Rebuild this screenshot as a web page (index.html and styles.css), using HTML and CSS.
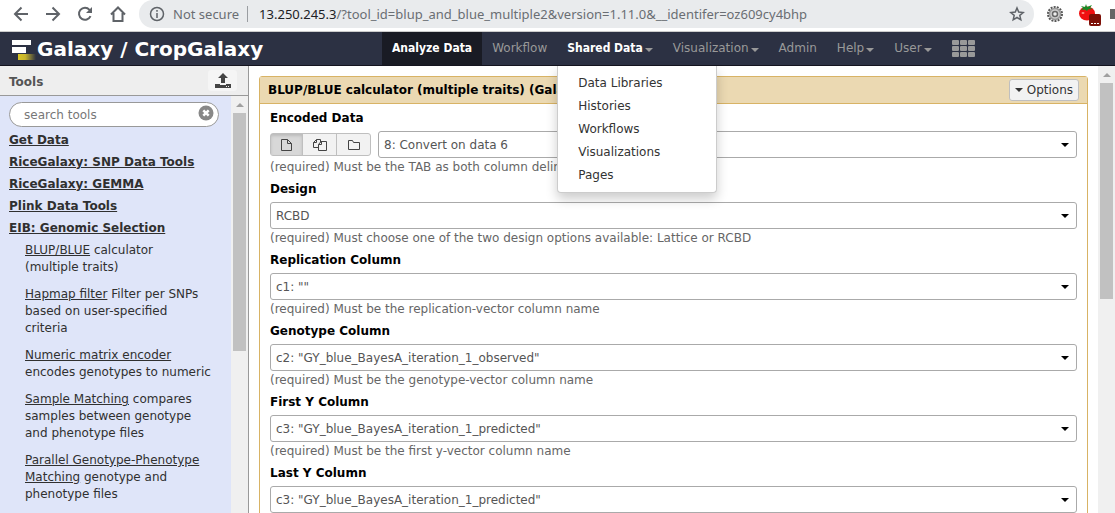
FILE: index.html
```html
<!DOCTYPE html>
<html lang="en">
<head>
<meta charset="utf-8">
<title>Galaxy / CropGalaxy</title>
<link rel="stylesheet" href="styles.css">
</head>
<body>
<div class="browser">
  <button class="tool" aria-label="Back"><svg width="16" height="16" viewBox="0 0 16 16"><path d="M15 8H2M8.500 1.500L2 8l6.500 6.500"/></svg></button>
  <button class="tool" aria-label="Forward"><svg width="16" height="16" viewBox="0 0 16 16"><path d="M1 8h13M7.500 1.500L14 8l-6.500 6.500"/></svg></button>
  <button class="tool" aria-label="Reload"><svg width="16" height="16" viewBox="0 0 16 16"><path d="M13.500 10.200A6 6 0 1 1 12.500 3.800L14 5.500"/><path class="solid" d="M15 1v6H9z"/></svg></button>
  <button class="tool" aria-label="Home"><svg width="18" height="18" viewBox="0 0 18 18"><path d="M2 9.500L9 2.500l7 7M4.500 8v8h9V8"/></svg></button>
  <div class="omnibox">
    <svg class="info" width="16" height="16" viewBox="0 0 16 16"><circle cx="8" cy="8" r="6.500"/><path d="M8 7v5M8 4v1.800"/></svg>
    <span class="insecure">Not secure</span>
    <span class="url"><b>13.250.245.3</b>/?tool_id=blup_and_blue_multiple2&amp;version=1.11.0&amp;__identifer=oz609cy4bhp</span>
    <button class="star" aria-label="Bookmark"><svg width="16" height="16" viewBox="0 0 16 16"><path d="M8 2l1.700 4.100 4.500.4-3.400 2.900 1 4.400L8 11.500l-3.800 2.300 1-4.400-3.400-2.900 4.500-.4z"/></svg></button>
  </div>
  <svg class="ext" width="18" height="18" viewBox="0 0 18 18"><circle cx="9" cy="9" r="7" fill="none" stroke="#555" stroke-width="2" stroke-dasharray="2 1.140"/><circle cx="9" cy="9" r="5.500" fill="#ccc" stroke="#999" stroke-width="1.500"/><circle cx="9" cy="9" r="2.500" fill="#eee" stroke="#666" stroke-width="1.500"/></svg>
  <svg class="ext" width="24" height="24" viewBox="0 0 24 24"><ellipse cx="9" cy="11.500" rx="8" ry="7" fill="#f01010"/><path d="M8 2l1 3 5-2-2 3 3 1-5 .5L9 9 7 7.500 3 8l2-2-2-2 4 1z" fill="#178a25"/><ellipse cx="5" cy="11" rx="1.500" ry="1" fill="#ff9080"/><rect x="11" y="12" width="12" height="12" rx="2" fill="#7d1007"/><path d="M13 21.500h8" stroke="#fff" stroke-dasharray="2 1"/></svg>
  <span class="more"></span>
</div>

<header class="masthead">
  <a class="brand" href="#"><svg width="26" height="23" viewBox="0 0 26 23"><defs><linearGradient id="bar"><stop offset="0" stop-color="#d8c426"/><stop offset=".4" stop-color="#c8b52d"/><stop offset="1" stop-color="#2c3143"/></linearGradient></defs><path fill="#fff" d="M1 3h19v5H1zM1 10h14v6H1z"/><path fill="url(#bar)" d="M7 17h18v6H7z"/></svg><span>Galaxy / CropGalaxy</span></a>
  <nav class="nav">
    <a class="active" href="#">Analyze Data</a>
    <a href="#">Workflow</a>
    <div class="drop"><a class="open" href="#">Shared Data<i class="caret"></i></a>
      <div class="menu"><a href="#">Data Libraries</a><a href="#">Histories</a><a href="#">Workflows</a><a href="#">Visualizations</a><a href="#">Pages</a></div>
    </div>
    <a href="#">Visualization<i class="caret"></i></a>
    <a href="#">Admin</a>
    <a href="#">Help<i class="caret"></i></a>
    <a href="#">User<i class="caret"></i></a>
    <a href="#" aria-label="Scratchbook"><svg width="23" height="17" viewBox="0 0 23 17" fill="#999"><rect width="7" height="5" rx="1"/><rect x="8" width="7" height="5" rx="1"/><rect x="16" width="7" height="5" rx="1"/><rect y="6" width="7" height="5" rx="1"/><rect x="8" y="6" width="7" height="5" rx="1"/><rect x="16" y="6" width="7" height="5" rx="1"/><rect y="12" width="7" height="5" rx="1"/><rect x="8" y="12" width="7" height="5" rx="1"/><rect x="16" y="12" width="7" height="5" rx="1"/></svg></a>
  </nav>
</header>

<div class="workspace">
  <aside class="sidebar">
    <div class="side-head"><h2>Tools</h2><button class="upload" aria-label="Upload data"><svg width="16" height="16" viewBox="0 0 16 16" fill="#444"><path d="M8 0l5 5H10v5H6V5H3z"/><path d="M0 11h5v1h6v-1h5v4H0z"/><path d="M11 13h1v1h-1zM13 13h1v1h-1z" fill="#eee"/></svg></button></div>
    <div class="side-body">
      <div class="tools">
        <div class="search"><input type="text" placeholder="search tools" aria-label="search tools"><button aria-label="Clear"><svg width="16" height="16" viewBox="0 0 16 16"><circle cx="8" cy="8" r="7.500" fill="#888"/><path d="M5.300 5.300l5.400 5.400M10.700 5.300l-5.400 5.400" stroke="#fff" stroke-width="2.500"/></svg></button></div>
        <a class="section" href="#">Get Data</a>
        <a class="section" href="#">RiceGalaxy: SNP Data Tools</a>
        <a class="section" href="#">RiceGalaxy: GEMMA</a>
        <a class="section" href="#">Plink Data Tools</a>
        <a class="section" href="#">EIB: Genomic Selection</a>
        <div class="list">
          <p><a href="#">BLUP/BLUE</a> calculator (multiple&nbsp;traits)</p>
          <p><a href="#">Hapmap filter</a> Filter per SNPs based on user-specified criteria</p>
          <p><a href="#">Numeric matrix encoder</a> encodes genotypes to numeric</p>
          <p><a href="#">Sample Matching</a> compares samples between genotype and phenotype files</p>
          <p><a href="#">Parallel Genotype-Phenotype Matching</a> genotype and phenotype files</p>
        </div>
      </div>
      <div class="scroll"><i class="up"></i><div class="thumb side-thumb"></div></div>
    </div>
  </aside>
  <main class="center">
    <section class="panel">
      <div class="panel-head"><h1>BLUP/BLUE calculator (multiple traits) (Galaxy Version 1.11.0)</h1><button class="options"><i class="caret"></i>Options</button></div>
      <form class="form">
        <div class="field"><label for="f1">Encoded Data</label>
          <div class="row">
            <div class="group">
              <button type="button" class="on" aria-label="Single dataset"><svg width="13" height="14" viewBox="0 0 13 14"><path d="M1.500 1.500h6l4 4v7h-10zM7.500 1.500v4h4"/></svg></button><button type="button" aria-label="Multiple datasets"><svg width="14" height="14" viewBox="0 0 14 14"><path d="M5.500 9.500h-5v-5l3-3h4v3M3.500 1.500v3h-3M5.500 6.500l2.500-3h5.500v9h-8zM8.500 3.500v3h-3"/></svg></button><button type="button" aria-label="Dataset collection"><svg width="14" height="12" viewBox="0 0 14 12"><path d="M1.500 1.500h4l1 2h6v7h-11z"/></svg></button>
            </div>
            <div class="select"><select id="f1"><option>8: Convert on data 6</option></select></div>
          </div>
          <p>(required) Must be the TAB as both column delimiter</p></div>
        <div class="field"><label for="f2">Design</label><div class="select"><select id="f2"><option>RCBD</option></select></div><p>(required) Must choose one of the two design options available: Lattice or RCBD</p></div>
        <div class="field"><label for="f3">Replication Column</label><div class="select"><select id="f3"><option>c1: ""</option></select></div><p>(required) Must be the replication-vector column name</p></div>
        <div class="field"><label for="f4">Genotype Column</label><div class="select"><select id="f4"><option>c2: "GY_blue_BayesA_iteration_1_observed"</option></select></div><p>(required) Must be the genotype-vector column name</p></div>
        <div class="field"><label for="f5">First Y Column</label><div class="select"><select id="f5"><option>c3: "GY_blue_BayesA_iteration_1_predicted"</option></select></div><p>(required) Must be the first y-vector column name</p></div>
        <div class="field"><label for="f6">Last Y Column</label><div class="select"><select id="f6"><option>c3: "GY_blue_BayesA_iteration_1_predicted"</option></select></div></div>
      </form>
    </section>
  </main>
  <div class="scroll"><i class="up"></i><div class="thumb main-thumb"></div></div>
</div>
</body>
</html>
```

FILE: styles.css
```css
* { box-sizing: border-box; }
body { margin: 0; height: 100vh; overflow: hidden; display: flex; flex-direction: column; background: #fff; color: #303030; font: 12px/17px "DejaVu Sans", sans-serif; }
h1, h2, p { margin: 0; font-size: inherit; }
button, input, select { font: inherit; color: inherit; margin: 0; }
button { padding: 0; border: 0; background: none; }
svg { display: block; flex: none; }
a { color: inherit; }

.browser { flex: none; height: 32px; padding: 0 0 4px 13px; display: flex; align-items: center; background: #fff; border-bottom: 1px solid #ccc; font: 13px/26px "Noto Sans", sans-serif; overflow: hidden; }
.tool { width: 32px; flex: none; }
.tool svg, .info, .star svg { fill: none; stroke: #5f6368; stroke-width: 2; }
.tool .solid { fill: #5f6368; stroke: none; }
.omnibox { flex: 1; min-width: 0; height: 28px; margin-left: -2px; padding: 0 9px 0 10px; display: flex; align-items: center; background: #e9ebed; border-radius: 14px; color: #6a6e73; white-space: nowrap; }
.info { stroke-width: 1.5; }
.insecure { margin-left: 8px; padding-right: 8px; border-right: 1px solid #9a9da1; line-height: 16px; }
.url { flex: 1; min-width: 0; overflow: hidden; margin-left: 11px; }
.url b { font-weight: 400; color: #202124; }
.star svg { stroke-width: 1.5; }
.ext { margin-left: 12px; }
.ext + .ext { margin-left: 14px; }
.more { width: 5px; height: 10px; margin-left: 8px; background: #666; }

.masthead { position: relative; z-index: 2; flex: none; height: 34px; display: flex; background: #2c3143; border-bottom: 1px solid #14141f; }
.brand { flex: none; width: 382px; padding-left: 11px; display: flex; align-items: center; color: #fff; text-decoration: none; font: bold 20px/32px "DejaVu Sans", sans-serif; }
.nav { display: flex; line-height: 33px; color: #999; }
.nav a { display: flex; align-items: center; height: 33px; padding: 0 10px; text-decoration: none; white-space: nowrap; }
.nav .active, .nav .open { color: #fff; font-family: "DejaVu Sans Condensed", "DejaVu Sans", sans-serif; font-weight: bold; }
.nav .active { background: #191b24; }
.caret { display: inline-block; border: 4px solid transparent; border-top-color: currentColor; border-bottom: 0; }
.nav .caret { margin: 3px 0 0 2px; color: #999; }
.drop { position: relative; }
.menu { position: absolute; top: 34px; left: 0; width: 160px; padding: 6px 0 5px; background: #fff; border: 1px solid #ccc; border-top: 0; border-radius: 0 0 4px 4px; box-shadow: 0 6px 12px rgba(0,0,0,.2); color: #333; }
.nav .menu a { height: 23px; padding: 0 20px; }

.workspace { flex: 1; min-height: 0; display: flex; }
.sidebar { flex: none; width: 249px; display: flex; flex-direction: column; border-right: 1px solid #999; background: #dfe5f9; }
.side-head { flex: none; height: 30px; padding: 0 11px 0 9px; display: flex; align-items: center; justify-content: space-between; background: #eee; border-bottom: 1px solid #999; color: #555; }
.side-head h2 { padding-top: 3px; }
.upload { width: 29px; height: 21px; background: #f5f5f5; border-radius: 3px; }
.upload svg { margin: 0 auto; }
.side-body { flex: 1; min-height: 0; display: flex; }
.tools { flex: 1; min-width: 0; overflow: hidden; padding: 6px 12px 0 9px; }
.search { position: relative; margin-bottom: 2px; }
.search input { display: block; width: 100%; height: 25px; padding: 0 28px 0 14px; border: 1px solid #999; border-radius: 13px; background: #fff; }
.search input::placeholder { color: #777; }
.search button { position: absolute; right: 5px; top: 3px; }
.section { display: block; line-height: 22px; font-weight: bold; }
.list { padding: 3px 7px 0 16px; }
.list p { margin-bottom: 10px; }
.scroll { flex: none; width: 17px; background: #f0f0f0; padding: 7px 2px 0; display: flex; flex-direction: column; align-items: center; }
.up { border: 4px solid transparent; border-bottom-color: #a0a0a0; border-top: 0; }
.thumb { width: 13px; margin-top: 6px; background: #c1c1c1; }
.side-thumb { height: 58%; }
.main-thumb { height: 49%; }

.center { flex: 1; min-width: 0; overflow: hidden; padding: 10px 10px 0; }
.panel { border: 1px solid #d8b365; border-radius: 3px 3px 0 0; }
.panel-head { height: 27px; padding: 0 8px; display: flex; align-items: center; justify-content: space-between; background: #ebd9b2; border-bottom: 1px solid #d8b365; color: #000; white-space: nowrap; }
.options { height: 22px; padding: 0 5px; background: #f2f2f2; border: 1px solid #bfbfbf; border-radius: 3px; color: #333; }
.options .caret { margin: 0 4px 2px 0; }
.form { padding: 4px 10px; }
.field { height: 71px; }
.field label { display: block; line-height: 20px; margin-bottom: 3px; font-weight: bold; color: #000; }
.field p { line-height: 18px; color: #666; white-space: nowrap; }
.row { display: flex; gap: 7px; align-items: center; }
.group { display: flex; flex: none; height: 23px; border: 1px solid #bfbfbf; border-radius: 3px; background: #f2f2f2; }
.group button { width: 34px; display: flex; align-items: center; justify-content: center; border-left: 1px solid #bfbfbf; }
.group button:first-child { width: 31px; border-left: 0; }
.group .on { background: #d8d8d8; box-shadow: inset 0 2px 3px #bbb; }
.group svg { fill: none; stroke: #444; }
.select { position: relative; flex: 1; }
.select::after { content: ""; position: absolute; right: 8px; top: 12px; border: 4px solid transparent; border-top-color: #000; border-bottom: 0; pointer-events: none; }
.select select { display: block; width: 100%; height: 27px; padding: 1px 5px 0; appearance: none; background: #fff; border: 1px solid #aaa; border-radius: 3px; color: #555; }
```
